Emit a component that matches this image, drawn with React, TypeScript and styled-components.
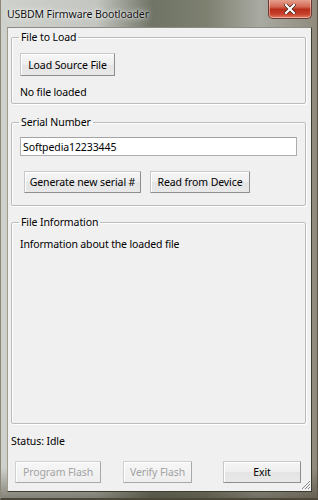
import React from "react";
import styled, { createGlobalStyle } from "styled-components";

const Global = createGlobalStyle`
  html, body { margin: 0; padding: 0; }
  body { width: 318px; height: 500px; overflow: hidden; font-family: "Noto Sans", "DejaVu Sans", sans-serif; }
`;

const Window = styled.div`
  width: 318px;
  height: 500px;
  box-sizing: border-box;
  display: flex;
  flex-direction: column;
  padding: 0 5px 6px 6px;
  background:
    linear-gradient(180deg, rgba(0, 0, 0, 0) 0%, rgba(0, 0, 0, 0) 94%, rgba(60, 55, 40, 0.5) 100%),
    linear-gradient(90deg, #cfd1cc 0%, #c3c6c0 30%, #6f7466 48%, #7d806f 65%, #a9aaa2 82%, #8f8a7c 100%);
  border-left: 1px solid #8d8878;
  border-right: 1px solid #5b5648;
  border-bottom: 2px solid #4c4738;
  position: relative;
  overflow: hidden;
`;

const TitleBar = styled.div`
  height: 27px;
  display: flex;
  align-items: flex-start;
  justify-content: space-between;
`;

const Title = styled.div`
  margin-top: 7px;
  font-size: 10.5px;
  letter-spacing: -0.1px;
  color: #111;
  text-shadow: 0 0 6px rgba(255, 255, 255, 0.95), 0 0 2px rgba(255, 255, 255, 0.9);
`;

const CloseButton = styled.div`
  width: 42px;
  height: 19px;
  margin-top: -1px;
  border: 1px solid #6b3a30;
  border-top: none;
  border-radius: 0 0 5px 5px;
  background: linear-gradient(180deg, #e8a897 0%, #d46a55 40%, #b8301c 55%, #c9412a 80%, #e0806a 100%);
  display: flex;
  align-items: center;
  justify-content: center;
  box-shadow: inset 0 0 0 1px rgba(255, 220, 210, 0.5);
`;

const Client = styled.div`
  flex: 1;
  background: #f0f0f0;
  border: 1px solid #3d3b30;
  border-top-color: #8b8d85;
  border-left-color: #a09c8c;
  display: flex;
  flex-direction: column;
  padding: 0 5px 8px 3px;
  min-height: 0;
`;

const Group = styled.fieldset<{ $mt: number; $pb: number; $grow?: boolean }>`
  margin: ${(p) => p.$mt}px 0 0 0;
  padding: 0 8px ${(p) => p.$pb}px 8px;
  border: 1px solid #bcbcbc;
  box-shadow: 1px 1px 0 #ffffff, inset 1px 1px 0 #ffffff;
  border-radius: 2px;
  min-width: 0;
  display: flex;
  flex-direction: column;
  align-items: flex-start;
  flex: ${(p) => (p.$grow ? 1 : "none")};
`;

const Legend = styled.legend`
  padding: 0 2px;
  margin-left: -1px;
  font-size: 10.5px;
  letter-spacing: -0.1px;
  line-height: 13px;
  color: #000;
`;

const Label = styled.div<{ $mt: number }>`
  margin-top: ${(p) => p.$mt}px;
  font-size: 10.5px;
  letter-spacing: -0.15px;
  line-height: 14px;
  color: #000;
`;

const Button = styled.button<{ $w: number; $ml?: number; $mt?: number; $h?: number }>`
  width: ${(p) => p.$w}px;
  height: ${(p) => p.$h ?? 22}px;
  margin-left: ${(p) => p.$ml ?? 0}px;
  margin-top: ${(p) => p.$mt ?? 0}px;
  padding: 0;
  font-family: inherit;
  font-size: 10.5px;
  letter-spacing: -0.1px;
  color: #000;
  border: 1px solid #c8c8c8;
  border-right-color: #8e8e8e;
  border-bottom-color: #8e8e8e;
  border-radius: 1px;
  background: linear-gradient(180deg, #f6f6f6 0%, #eeeeee 50%, #e4e4e4 51%, #e8e8e8 100%);
  box-shadow: inset 1px 1px 0 #ffffff;
  &:disabled {
    color: #a3a3a3;
    border-color: #d0d0d0;
    border-right-color: #a8a8a8;
    border-bottom-color: #a8a8a8;
    background: linear-gradient(180deg, #f6f6f6 0%, #eeeeee 100%);
  }
`;

const Input = styled.input`
  margin-top: 8px;
  width: 100%;
  height: 19px;
  box-sizing: border-box;
  border: 1px solid #abadb3;
  border-top-color: #a3a3a3;
  border-left-color: #b4b4b4;
  padding: 0 2px;
  font-family: inherit;
  font-size: 10.5px;
  letter-spacing: -0.1px;
  color: #000;
  background: #fff;
  outline: none;
`;

const ButtonRow = styled.div<{ $mt: number; $ml?: number }>`
  display: flex;
  margin-top: ${(p) => p.$mt}px;
  margin-left: ${(p) => p.$ml ?? 0}px;
`;

const Status = styled.div`
  margin-top: 10px;
  font-size: 10.5px;
  letter-spacing: -0.1px;
  line-height: 14px;
  color: #000;
`;

const Grip = styled.svg`
  position: absolute;
  right: 6px;
  bottom: 8px;
`;

export default function App() {
  return (
    <>
      <Global />
      <Window>
        <TitleBar>
          <Title>USBDM Firmware Bootloader</Title>
          <CloseButton>
            <svg width="12" height="10" viewBox="0 0 12 10">
              <path d="M2 1 L10 9 M10 1 L2 9" stroke="#3a1a14" strokeWidth="3.4" strokeLinecap="square" />
              <path d="M2 1 L10 9 M10 1 L2 9" stroke="#ffffff" strokeWidth="2.2" strokeLinecap="square" />
            </svg>
          </CloseButton>
        </TitleBar>
        <Client>
          <Group $mt={3} $pb={4}>
            <Legend>File to Load</Legend>
            <Button $w={95} $h={23} $mt={9}>Load Source File</Button>
            <Label $mt={9}>No file loaded</Label>
          </Group>
          <Group $mt={12} $pb={12}>
            <Legend>Serial Number</Legend>
            <Input defaultValue="Softpedia12233445" readOnly />
            <ButtonRow $mt={15} $ml={4}>
              <Button $w={117}>Generate new serial #</Button>
              <Button $w={100} $ml={9}>Read from Device</Button>
            </ButtonRow>
          </Group>
          <Group $mt={10} $pb={0} $grow>
            <Legend>File Information</Legend>
            <Label $mt={8}>Information about the loaded file</Label>
          </Group>
          <Status>Status: Idle</Status>
          <ButtonRow $mt={13} $ml={4}>
            <Button $w={86} disabled>Program Flash</Button>
            <Button $w={69} $ml={22} disabled>Verify Flash</Button>
            <Button $w={78} $ml={31}>Exit</Button>
          </ButtonRow>
        </Client>
        <Grip width="10" height="10" viewBox="0 0 10 10">
          <path d="M9 1 L1 9 M9 4 L4 9 M9 7 L7 9" stroke="#8a8a8a" strokeWidth="1" />
        </Grip>
      </Window>
    </>
  );
}
